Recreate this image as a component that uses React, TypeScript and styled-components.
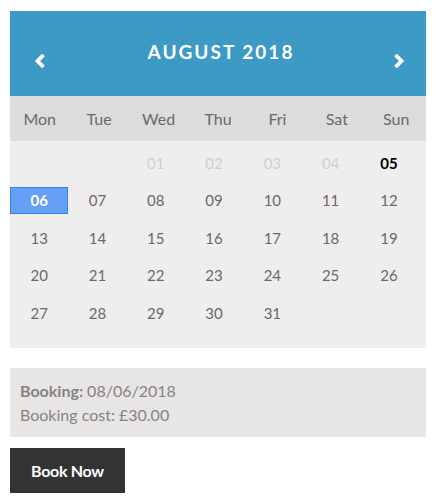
import React from "react";
import styled, { createGlobalStyle } from "styled-components";

const Global = createGlobalStyle`
  html, body { margin: 0; padding: 0; background: #fff; }
  body { font-family: Lato, "Noto Sans", sans-serif; }
`;

const Page = styled.div`
  padding: 11px 10px 0 10px;
  width: 416px;
`;

const Header = styled.div`
  height: 85px;
  background: #3d9ac4;
  color: #fff;
  display: grid;
  grid-template-columns: 60px 1fr 54px;
  align-items: start;
`;

const Arrow = styled.div`
  display: flex;
  justify-content: center;
  padding-top: 43px;
`;

const Title = styled.div`
  text-align: center;
  font-size: 19px;
  font-weight: 700;
  letter-spacing: 2px;
  padding-top: 29px;
`;

const DayNames = styled.div`
  height: 45px;
  background: #dcdcdc;
  display: grid;
  grid-template-columns: repeat(7, 1fr);
  align-items: center;
`;

const DayName = styled.div`
  text-align: center;
  font-size: 16px;
  color: #6e6767;
`;

const Body = styled.div`
  background: #eeeeee;
  padding: 8px 0 22px 0;
`;

const Grid = styled.div`
  display: grid;
  grid-template-columns: repeat(7, 58.3px);
  row-gap: 10.5px;
`;

const Cell = styled.div<{ $kind: "empty" | "off" | "today" | "sel" | "day" }>`
  height: 27px;
  box-sizing: border-box;
  display: flex;
  align-items: center;
  justify-content: center;
  font-size: 15px;
  color: ${(p) =>
    p.$kind === "off" ? "#cfcfcf" : p.$kind === "today" ? "#000" : p.$kind === "sel" ? "#fff" : "#6e6767"};
  font-weight: ${(p) => (p.$kind === "today" || p.$kind === "sel" ? 700 : 400)};
  background: ${(p) => (p.$kind === "sel" ? "#669ff6" : "transparent")};
  border: 1px solid ${(p) => (p.$kind === "sel" ? "#2f86f2" : "transparent")};
`;

const Info = styled.div`
  margin-top: 20px;
  background: #e8e6e4;
  padding: 11px 10px 10px 10px;
  color: #878282;
  font-size: 16px;
  line-height: 24px;
`;

const Strong = styled.b`
  font-weight: 700;
`;

const Button = styled.button`
  display: block;
  margin-top: 11px;
  width: 115px;
  height: 45px;
  background: #333333;
  color: #fff;
  border: none;
  font-family: Lato, "Noto Sans", sans-serif;
  font-size: 16px;
  font-weight: 700;
  letter-spacing: -0.3px;
  cursor: pointer;
`;

const Chevron = ({ dir }: { dir: "left" | "right" }) => (
  <svg width="12" height="14" viewBox="0 0 12 14">
    <polyline
      points={dir === "left" ? "9.5,1 3.5,7 9.5,13" : "2.5,1 8.5,7 2.5,13"}
      fill="none"
      stroke="#fff"
      strokeWidth="3.8"
      strokeLinecap="butt"
      strokeLinejoin="miter"
    />
  </svg>
);

const days = ["Mon", "Tue", "Wed", "Thu", "Fri", "Sat", "Sun"];

export default function App() {
  const cells: { label: string; kind: "empty" | "off" | "today" | "sel" | "day" }[] = [];
  cells.push({ label: "", kind: "empty" }, { label: "", kind: "empty" });
  for (let d = 1; d <= 31; d++) {
    const label = String(d).padStart(2, "0");
    const kind = d < 5 ? "off" : d === 5 ? "today" : d === 6 ? "sel" : "day";
    cells.push({ label, kind });
  }
  return (
    <Page>
      <Global />
      <Header>
        <Arrow>
          <Chevron dir="left" />
        </Arrow>
        <Title>AUGUST 2018</Title>
        <Arrow>
          <Chevron dir="right" />
        </Arrow>
      </Header>
      <DayNames>
        {days.map((d) => (
          <DayName key={d}>{d}</DayName>
        ))}
      </DayNames>
      <Body>
        <Grid>
          {cells.map((c, i) => (
            <Cell key={i} $kind={c.kind}>
              {c.label}
            </Cell>
          ))}
        </Grid>
      </Body>
      <Info>
        <div>
          <Strong>Booking:</Strong> 08/06/2018
        </div>
        <div>Booking cost: £30.00</div>
      </Info>
      <Button>Book Now</Button>
    </Page>
  );
}
